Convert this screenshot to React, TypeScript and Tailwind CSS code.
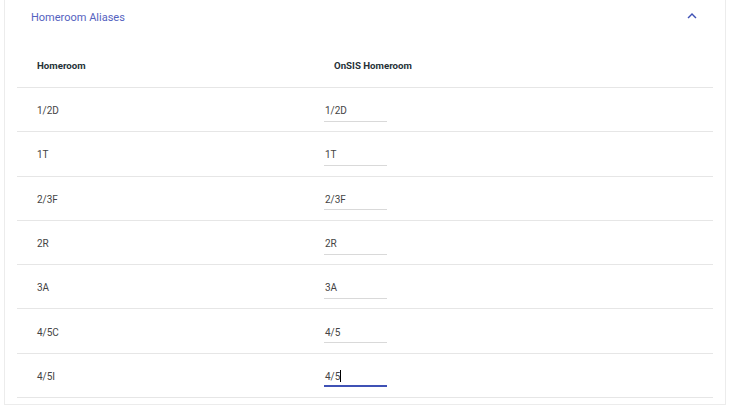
import React from 'react';

const rows = [
  { homeroom: '1/2D', onsis: '1/2D' },
  { homeroom: '1T', onsis: '1T' },
  { homeroom: '2/3F', onsis: '2/3F' },
  { homeroom: '2R', onsis: '2R' },
  { homeroom: '3A', onsis: '3A' },
  { homeroom: '4/5C', onsis: '4/5' },
  { homeroom: '4/5I', onsis: '4/5', focused: true },
];

export default function App() {
  return (
    <div className="w-[730px] h-[415px] bg-white overflow-hidden" style={{ fontFamily: 'Roboto, "Liberation Sans", sans-serif' }}>
      <div className="ml-[4px] w-[722px] h-[405px] border-x border-b border-[#ececec] bg-white">
        {/* Panel header */}
        <div className="h-[36px] flex items-center justify-between pl-[26px] pr-[24px]">
          <span className="text-[11px] text-[#5462c0]">Homeroom Aliases</span>
          <svg width="18" height="18" viewBox="0 0 24 24" className="fill-[#3f51b5] mt-[-5px]">
            <path d="M12 8l-6 6 1.41 1.41L12 10.83l4.59 4.58L18 14z" />
          </svg>
        </div>

        {/* Table */}
        <div className="mt-[10px] mx-[12px]">
          <div className="h-[42px] flex items-center border-b border-[#e6e6e6] text-[9.7px] font-bold text-[#263238]">
            <div className="w-[307px] pl-[20px]">Homeroom</div>
            <div className="pl-[10px]">OnSIS Homeroom</div>
          </div>
          {rows.map((row) => (
            <div key={row.homeroom} className="h-[44.3px] flex items-center border-b border-[#e6e6e6] text-[10px] text-[#444444]">
              <div className="w-[307px] pl-[20px] pt-[2px]">{row.homeroom}</div>
              <div
                className={
                  row.focused
                    ? 'w-[63px] h-[24px] flex items-center pl-[1px] pt-[4px] border-b-2 border-[#3f51b5]'
                    : 'w-[63px] h-[24px] flex items-center pl-[1px] pt-[3px] border-b border-[#d9d9d9]'
                }
              >
                {row.onsis}
                {row.focused && <span className="inline-block w-px h-[12px] bg-black" />}
              </div>
            </div>
          ))}
        </div>
      </div>
    </div>
  );
}
